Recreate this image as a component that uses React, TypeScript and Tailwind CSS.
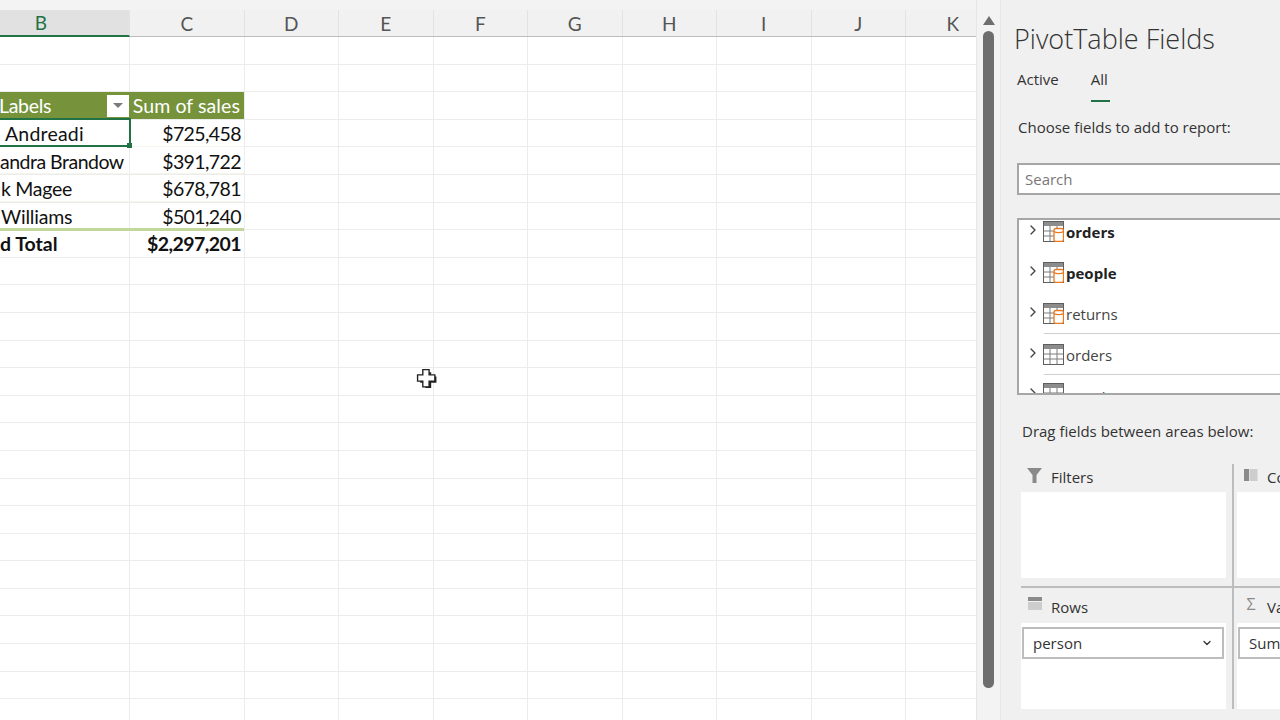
import { ChevronRight, ChevronDown } from "lucide-react";

const cols = [
  { name: "B", w: "w-[130px]" },
  { name: "C", w: "w-[114.5px]" },
  { name: "D", w: "w-[94.5px]" },
  { name: "E", w: "w-[94.5px]" },
  { name: "F", w: "w-[94.5px]" },
  { name: "G", w: "w-[94.5px]" },
  { name: "H", w: "w-[94.5px]" },
  { name: "I", w: "w-[94.5px]" },
  { name: "J", w: "w-[94.5px]" },
  { name: "K", w: "w-[94.5px]" },
];

const pivot = [
  { label: "Andreadi", cls: "pl-[5px] tracking-[0.2px]", value: "$725,458" },
  { label: "andra Brandow", cls: "pl-0 tracking-[-0.5px]", value: "$391,722" },
  { label: "k Magee", cls: "pl-[1px] tracking-[-0.3px]", value: "$678,781" },
  { label: "Williams", cls: "pl-[1px] tracking-[-0.2px]", value: "$501,240" },
];

const fields = [
  { name: "orders", bold: true, model: true, sep: false },
  { name: "people", bold: true, model: true, sep: false },
  { name: "returns", bold: false, model: true, sep: true },
  { name: "orders", bold: false, model: false, sep: true },
];

function TableIcon({ model }: { model: boolean }) {
  return (
    <svg width="21" height="21" viewBox="0 0 21 21" className="shrink-0 -mt-[2px] block" fill="none">
      <rect x="0.5" y="0.5" width="20" height="20" fill="#fff" stroke="#5f5f5f" />
      <rect x="1" y="1" width="19" height="4" fill="#8c8c8c" />
      <path d="M7 5v15M14 5v15M1 10h19M1 15h19" stroke="#7d7d7d" />
      {model && (
        <g>
          <rect x="11" y="7.500" width="9.500" height="13" rx="2" fill="#fff" stroke="#e8791e" strokeWidth="1.300" />
          <path d="M11 10.500c2 1.500 7.500 1.500 9.500 0" stroke="#e8791e" strokeWidth="1.200" />
        </g>
      )}
    </svg>
  );
}

function Sheet() {
  return (
    <div className="w-[976px] shrink-0 bg-white relative overflow-hidden">
      <div className="h-[10px] bg-[#f3f3f3]" />
      <div className="flex h-[27px] bg-[#f1f1f1] border-b border-[#bdbdbd]">
        {cols.map((c, i) => (
          <div
            key={c.name}
            className={`${c.w} shrink-0 flex items-center justify-center text-[19px] pt-[2px] border-r border-[#e2e2e2] ${
              i === 0 ? "bg-[#e1e1e1] text-[#217346] border-b-2 border-b-[#217346] h-[27px] pr-[47px]" : "text-[#555]"
            }`}
          >
            {c.name}
          </div>
        ))}
      </div>
      {Array.from({ length: 25 }).map((_, r) => (
        <div key={r} className="flex h-[27.6px]">
          {cols.map((c) => (
            <div key={c.name} className={`${c.w} shrink-0 border-r border-b border-[#ececec]`} />
          ))}
        </div>
      ))}

      {/* pivot table sits over the grid */}
      <div className="absolute left-0 top-[92px] w-[244px] text-[19.5px] text-[#111]">
        <div className="flex h-[27px] bg-[#76933c] text-white items-center">
          <div className="w-[130px] flex items-center justify-between pr-[1px]">
            <span className="-ml-[1px] pt-[1px] tracking-[-0.3px]">Labels</span>
            <span className="w-[22px] h-[22px] bg-white flex items-center justify-center">
              <span className="w-0 h-0 border-x-[5px] border-x-transparent border-t-[5px] border-t-[#7a7a7a]" />
            </span>
          </div>
          <div className="flex-1 text-right pr-[4px] pt-[1px] tracking-[0.1px]">Sum of sales</div>
        </div>
        {pivot.map((p) => (
          <div key={p.label} className="flex h-[27.6px] items-center pt-[3px] border-b border-[#f4f6ec]">
            <div className={`w-[130px] ${p.cls} whitespace-nowrap`}>{p.label}</div>
            <div className="flex-1 text-right pr-[3px] tracking-[-0.6px]">{p.value}</div>
          </div>
        ))}
        <div className="flex h-[28px] items-center border-t-[3px] border-[#c3d69b] font-bold -mt-[1px]">
          <div className="w-[130px] whitespace-nowrap">d Total</div>
          <div className="flex-1 text-right pr-[3px] tracking-[-0.55px]">$2,297,201</div>
        </div>
      </div>

      {/* selected cell */}
      <div className="absolute left-[-2px] top-[118px] w-[133px] h-[29px] border-2 border-[#217346]">
        <div className="absolute -right-[3px] -bottom-[3px] w-[5px] h-[5px] bg-[#217346] border-0" />
      </div>

      {/* excel cross cursor */}
      <svg className="absolute left-[416px] top-[368px]" width="22" height="22" viewBox="0 0 21 21">
        <path d="M8 7V3h5.500v4h5v6h-5v5H8v-5H3V7z" fill="#222" transform="translate(1 1)" />
        <path d="M6.500 6.500V1.500h6v5h5.500v6h-5.500v5.500h-6v-5.500H1.500v-6z" fill="#fff" stroke="#222" strokeWidth="1.300" />
      </svg>
    </div>
  );
}

function Scrollbar() {
  return (
    <div className="w-[25px] shrink-0 bg-[#f3f3f3] border-x border-[#e6e6e6] flex flex-col items-center pt-[16px]">
      <span className="w-0 h-0 border-x-[6px] border-x-transparent border-b-[9px] border-b-[#6e6e6e]" />
      <div className="mt-[6px] w-[11px] h-[657px] rounded-full bg-[#6e6e6e]" />
    </div>
  );
}

function AreaLabel({ icon, text, h, textCls }: { icon: React.ReactNode; text: string; h: string; textCls: string }) {
  return (
    <div className={`${h} flex items-center gap-[7px] pl-[5px] text-[15px] text-[#333]`}>
      <span className="w-[18px] h-[18px] flex items-center justify-center -mt-[4px]">{icon}</span>
      <span className={textCls}>{text}</span>
    </div>
  );
}

function PivotPanel() {
  return (
    <div className="flex-1 min-w-0 overflow-hidden bg-[#f0f0f0] font-['Open_Sans',sans-serif]">
      <div className="w-[400px] pl-[13px]">
        <div className="h-[9px]" />
        <h1 className="text-[27px] font-light leading-[40px] mt-[10px] text-[#333] whitespace-nowrap">PivotTable Fields</h1>
        <div className="flex gap-[32px] pl-[3px] mt-[8px] text-[15px] text-[#333]">
          <span className="h-[34px] leading-[22px] pt-[1px]">Active</span>
          <span className="h-[34px] leading-[22px] pt-[1px] relative">
            All
            <span className="absolute left-0 -right-[2px] bottom-[-1px] h-[2px] bg-[#217346]" />
          </span>
        </div>
        <p className="mt-[15px] pl-[4px] text-[15px] leading-[22px] text-[#333]">Choose fields to add to report:</p>
        <div className="mt-[25px] ml-[3px] h-[32px] border-2 border-[#a6a6a6] bg-white flex items-center pl-[6px] text-[15px] text-[#777]">
          Search
        </div>
        <div className="mt-[23px] ml-[3px] h-[177px] border-2 border-[#a6a6a6] bg-white overflow-hidden">
          <div className="-mt-[8px]">
            {fields.map((f) => (
              <div key={f.name + f.bold} className="h-[41px] relative flex items-center pl-[6px]">
                <ChevronRight size={16} strokeWidth={2} className="text-[#444] -mt-[6px] shrink-0" />
                <span className="ml-[2px]"><TableIcon model={f.model} /></span>
                <span className={`text-[15px] ${f.bold ? "font-bold text-[#222]" : "text-[#444]"} ml-[2px]`}>{f.name}</span>
                {f.sep && <span className="absolute left-[25px] right-0 bottom-[1px] h-[1px] bg-[#cfcfcf]" />}
              </div>
            ))}
            <div className="flex pl-[6px] pt-[9px] items-start">
              <ChevronRight size={16} strokeWidth={2} className="text-[#444] shrink-0" />
              <span className="ml-[2px]"><TableIcon model={false} /></span>
              <span className="text-[15px] text-[#444] ml-[2px] mt-[1px]">people</span>
            </div>
          </div>
        </div>
        <p className="mt-[25px] pl-[8px] text-[15px] leading-[22px] text-[#333]">Drag fields between areas below:</p>

        <div className="mt-[22px] ml-[7px] grid grid-cols-[205px_2px_200px]">
          <div>
            <AreaLabel
              h="h-[28px]"
              textCls="-mt-[2px]"
              text="Filters"
              icon={<svg width="16" height="16" viewBox="0 0 16 16"><path d="M0 0h15L9.500 7v8H5.500V7z" fill="#8a8a8a" /></svg>}
            />
            <div className="h-[86px] bg-white" />
          </div>
          <div className="row-span-2 ml-[6px] w-[2px] bg-[#bdbdbd]" />
          <div className="pl-[9px]">
            <AreaLabel
              h="h-[28px]"
              textCls="-mt-[2px]"
              text="Columns"
              icon={<svg width="14" height="14" viewBox="0 0 14 14"><rect width="5" height="12" fill="#8a8a8a" /><rect x="5.500" width="8" height="12" fill="#cdcdcd" /></svg>}
            />
            <div className="h-[86px] bg-white" />
          </div>
          <div className="col-start-1 mt-[8px] border-t-2 border-[#bdbdbd] w-[214px]">
            <AreaLabel
              h="h-[35px]"
              textCls="mt-[3px]"
              text="Rows"
              icon={<svg width="14" height="14" viewBox="0 0 14 14"><rect width="14" height="4" fill="#8a8a8a" /><rect y="5" width="14" height="8" fill="#cdcdcd" /></svg>}
            />
            <div className="w-[205px] h-[86px] bg-white pt-[4px] px-[1px]">
              <div className="h-[32px] w-[202px] border-2 border-[#bdbdbd] bg-white flex items-center justify-between pl-[9px] pr-[9px] text-[15px] text-[#333]">
                person
                <ChevronDown size={12} strokeWidth={2.5} className="text-[#333]" />
              </div>
            </div>
          </div>
          <div className="col-start-3 mt-[8px] border-t-2 border-[#bdbdbd] pl-[9px]">
            <AreaLabel
              h="h-[35px]"
              textCls="mt-[3px]"
              text="Values"
              icon={<span className="text-[16px] leading-none text-[#8a8a8a]">Σ</span>}
            />
            <div className="h-[86px] bg-white pt-[4px] pl-[1px]">
              <div className="h-[32px] border-2 border-[#bdbdbd] bg-white flex items-center pl-[9px] text-[15px] text-[#333]">
                Sum of sales
              </div>
            </div>
          </div>
        </div>
      </div>
    </div>
  );
}

export default function App() {
  return (
    <div className="flex w-[1280px] h-[720px] overflow-hidden bg-[#f0f0f0] font-['Lato',sans-serif]">
      <Sheet />
      <Scrollbar />
      <PivotPanel />
    </div>
  );
}
